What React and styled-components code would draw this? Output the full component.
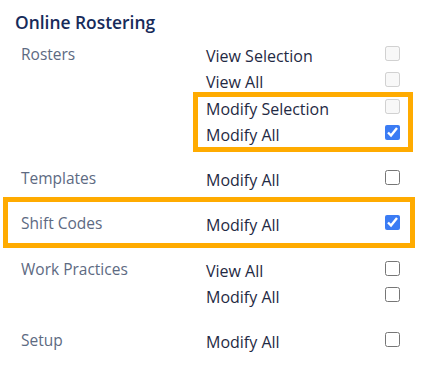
import React from 'react';
import styled, { createGlobalStyle } from 'styled-components';

const GlobalStyle = createGlobalStyle`
  body {
    margin: 0;
    background: #ffffff;
    font-family: "Open Sans", "Noto Sans", sans-serif;
  }
`;

const ORANGE = '#ffab00';

const Page = styled.div`
  width: 432px;
  padding-top: 11px;
`;

const Heading = styled.h2`
  margin: 0 0 0 15px;
  font-size: 17.4px;
  line-height: 22px;
  font-weight: 600;
  color: #172b5a;
`;

const List = styled.div`
  display: flex;
  flex-direction: column;
  gap: 5px;
  padding: 0 22px 0 8px;
`;

const Section = styled.div`
  display: grid;
  grid-template-columns: 185px 1fr;
  padding: 10px 10px 4px 13px;
  outline: ${p => (p.$marked ? `5px solid ${ORANGE}` : 'none')};
`;

const Label = styled.div`
  font-size: 15.5px;
  line-height: 22px;
  color: #5d6a82;
`;

const Options = styled.div`
  display: flex;
  flex-direction: column;
`;

const Marked = styled.div`
  display: flex;
  flex-direction: column;
  margin: 0 -9px;
  padding: 0 9px;
  outline: 5px solid ${ORANGE};
  outline-offset: -1px;
`;

const OptionRow = styled.label`
  display: flex;
  justify-content: space-between;
  align-items: flex-start;
  font-size: 16px;
  line-height: 26.3px;
  color: #1f2a44;
`;

const Box = styled.input.attrs({ type: 'checkbox' })`
  width: 15px;
  height: 15px;
  margin: 3px 0 0 0;
  accent-color: #3b7cf4;
`;

const Option = ({ text, checked, disabled }) => (
  <OptionRow>
    <span>{text}</span>
    <Box defaultChecked={checked} disabled={disabled} />
  </OptionRow>
);

export default function App() {
  return (
    <Page>
      <GlobalStyle />
      <Heading>Online Rostering</Heading>
      <List>
        <Section>
          <Label>Rosters</Label>
          <Options>
            <Option text="View Selection" disabled />
            <Option text="View All" disabled />
            <Marked>
              <Option text="Modify Selection" disabled />
              <Option text="Modify All" checked />
            </Marked>
          </Options>
        </Section>
        <Section>
          <Label>Templates</Label>
          <Options>
            <Option text="Modify All" />
          </Options>
        </Section>
        <Section $marked>
          <Label>Shift Codes</Label>
          <Options>
            <Option text="Modify All" checked />
          </Options>
        </Section>
        <Section>
          <Label>Work Practices</Label>
          <Options>
            <Option text="View All" />
            <Option text="Modify All" />
          </Options>
        </Section>
        <Section>
          <Label>Setup</Label>
          <Options>
            <Option text="Modify All" />
          </Options>
        </Section>
      </List>
    </Page>
  );
}
